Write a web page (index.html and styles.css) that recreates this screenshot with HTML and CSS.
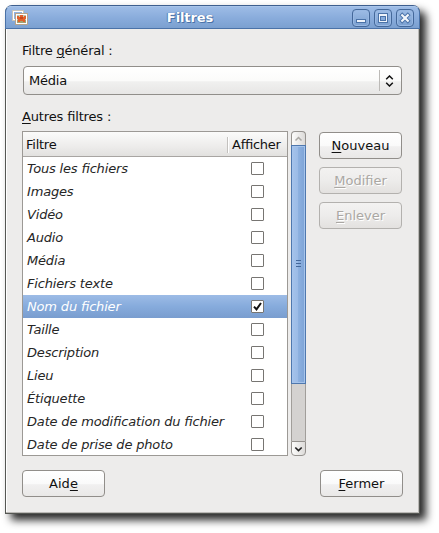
FILE: index.html
```
<!DOCTYPE html>
<html lang="fr">
<head>
<meta charset="utf-8">
<title>Filtres</title>
<link rel="stylesheet" href="styles.css">
</head>
<body>
<div class="window">
  <header class="titlebar">
    <svg class="app-icon" width="16" height="16" viewBox="0 0 16 16" shape-rendering="crispEdges">
      <path d="M0 0h12v3H3v8H0z" fill="#c9c4b8"/>
      <path d="M1 1h10v2H3v7H1z" fill="#fff"/>
      <path d="M2 2h8v1H3v6H2z" fill="#8fb4e2"/>
      <rect x="3" y="3" width="13" height="12" fill="#b8a48b"/>
      <rect x="4" y="4" width="11" height="10" fill="#fff"/>
      <rect x="5" y="5" width="9" height="8" fill="#b9cbb5"/>
      <rect x="5" y="10" width="9" height="3" fill="#a0a274"/>
      <path d="M5 6h2v1h1V5h3v2h1V6h2v3h-1v3h-2v-1H8v1H6V9H5z" fill="#e2602a"/>
      <path d="M8 7h3v2H8z" fill="#c8481a"/>
    </svg>
    <h1 class="title">Filtres</h1>
    <div class="controls">
      <svg class="control" width="18" height="18" viewBox="0 0 16 16" shape-rendering="crispEdges"><rect x="3" y="9" width="10" height="4" fill="#4a72a8"/><rect x="4" y="10" width="8" height="2" fill="#eef3fa"/></svg>
      <svg class="control" width="18" height="18" viewBox="0 0 16 16" shape-rendering="crispEdges"><rect x="3" y="3" width="10" height="10" fill="#4a72a8"/><rect x="4" y="4" width="8" height="8" fill="#eef3fa"/><rect x="5" y="6" width="6" height="5" fill="#4a72a8"/><rect x="6" y="7" width="4" height="3" fill="#86abdc"/></svg>
      <svg class="control" width="18" height="18" viewBox="0 0 16 16"><path d="M5.2 5.2l5.6 5.6M10.8 5.2l-5.6 5.6" stroke="#4a72a8" stroke-width="4" stroke-linecap="square"/><path d="M5.2 5.2l5.6 5.6M10.8 5.2l-5.6 5.6" stroke="#f3f6fb" stroke-width="2.2" stroke-linecap="square"/></svg>
    </div>
  </header>
  <main class="content">
    <div class="label">Filtre <u>g</u>énéral :</div>
    <div class="combo"><span>Média</span><span class="combo-arrows"><svg width="9" height="12" viewBox="0 0 9 12"><path d="M1.2 4.2L4.5 1l3.3 3.2M1.2 7.8L4.5 11l3.3-3.2" fill="none" stroke="#111" stroke-width="1.5"/></svg></span></div>
    <div class="label label-others"><u>A</u>utres filtres :</div>
    <div class="filters">
      <div class="list">
        <div class="list-head"><span class="head-name">Filtre</span><span class="head-show">Afficher</span></div>
        <div class="row"><span>Tous les fichiers</span><i class="check"></i></div>
        <div class="row"><span>Images</span><i class="check"></i></div>
        <div class="row"><span>Vidéo</span><i class="check"></i></div>
        <div class="row"><span>Audio</span><i class="check"></i></div>
        <div class="row"><span>Média</span><i class="check"></i></div>
        <div class="row"><span>Fichiers texte</span><i class="check"></i></div>
        <div class="row selected"><span>Nom du fichier</span><i class="check"><svg width="11" height="11" viewBox="0 0 11 11"><path d="M2 5.6L4.5 8.4L9 2" fill="none" stroke="#111" stroke-width="2"/></svg></i></div>
        <div class="row"><span>Taille</span><i class="check"></i></div>
        <div class="row"><span>Description</span><i class="check"></i></div>
        <div class="row"><span>Lieu</span><i class="check"></i></div>
        <div class="row"><span>Étiquette</span><i class="check"></i></div>
        <div class="row"><span>Date de modification du fichier</span><i class="check"></i></div>
        <div class="row"><span>Date de prise de photo</span><i class="check"></i></div>
      </div>
      <div class="scrollbar">
        <div class="step step-up"><svg width="9" height="6" viewBox="0 0 9 6"><path d="M1.5 4.5l3-3 3 3" fill="none" stroke="#aaa8a4" stroke-width="1.5"/></svg></div>
        <div class="thumb"><i></i><i></i><i></i></div>
        <div class="trough"></div>
        <div class="step step-down"><svg width="9" height="6" viewBox="0 0 9 6"><path d="M1.3 1.5l3.2 3 3.2-3" fill="none" stroke="#222" stroke-width="1.7"/></svg></div>
      </div>
      <div class="actions">
        <button class="button"><span><u>N</u>ouveau</span></button>
        <button class="button" disabled><span><u>M</u>odifier</span></button>
        <button class="button" disabled><span><u>E</u>nlever</span></button>
      </div>
    </div>
    <footer class="footer">
      <button class="button"><span>Aid<u>e</u></span></button>
      <button class="button"><span><u>F</u>ermer</span></button>
    </footer>
  </main>
</div>
</body>
</html>
```
FILE: styles.css
```
* { box-sizing: border-box; }
body {
  margin: 0;
  padding: 5px;
  height: 533px;
  overflow: hidden;
  background: #fff;
  font: 13px/16px "DejaVu Sans", sans-serif;
  font-feature-settings: "liga" 1;
  color: #111;
}
u { text-decoration: underline; text-decoration-thickness: 1px; text-underline-offset: 2px; }
.window {
  width: 415px;
  height: 509px;
  border: 1px solid #555753;
  border-top-color: #3e5f8f;
  border-radius: 7px 7px 0 0;
  background: #edeceb;
  box-shadow: inset -1px -1px #bbb9b6, inset 1px 0 #fff, 6px 6px 9px rgba(0, 0, 0, .85);
}
.titlebar {
  display: flex;
  align-items: center;
  height: 23px;
  margin: 0 -1px;
  padding: 0 5px 0 6px;
  border: 1px solid #4a72a8;
  border-top: 1px solid #a9c5ea;
  border-radius: 6px 6px 0 0;
  background: linear-gradient(#9dbce6, #88abdb 55%, #7ba0d0);
}
.app-icon { margin-top: 1px; }
.title {
  flex: 1;
  margin: 0;
  text-align: center;
  font-size: 13px;
  line-height: 16px;
  letter-spacing: -.1px;
  color: #fff;
  text-shadow: 1px 1px #4a72a8, 0 0 1px #4a72a8, -1px 0 #5d86bc;
}
.controls { display: flex; gap: 4px; }
.control {
  border: 1px solid #44689a;
  border-radius: 4px;
  background: linear-gradient(#9dbce6, #7ba0d0);
  box-shadow: inset 0 0 0 1px #98b8e3;
}
.content { padding: 14px 16px 0; }
.label { height: 16px; letter-spacing: -.22px; }
.combo {
  display: flex;
  align-items: center;
  justify-content: space-between;
  width: 379px;
  height: 29px;
  margin: 7px 0 0 1px;
  padding-left: 5px;
  border: 1px solid #918e8a;
  border-radius: 4px;
  background: linear-gradient(#fff, #fbfbfa 50%, #f0f0ef 55%, #e7e6e5);
  letter-spacing: -.2px;
}
.combo-arrows {
  display: flex;
  align-items: center;
  justify-content: center;
  width: 22px;
  height: 21px;
  padding-right: 2px;
  border-left: 1px solid #bcbab7;
}
.label-others { margin-top: 14px; letter-spacing: -.15px; }
.filters { display: flex; height: 325px; margin-top: 6px; }
.list {
  width: 266px;
  overflow: hidden;
  border: 1px solid #9c9995;
  background: #fff;
}
.list-head {
  display: flex;
  align-items: center;
  height: 25px;
  padding-top: 1px;
  border-bottom: 1px solid #a8a5a2;
  background: linear-gradient(#fbfbfa, #edeceb 60%, #e2e1df);
  letter-spacing: -.25px;
}
.head-name { width: 205px; padding-left: 3px; border-right: 1px solid #c3c1be; }
.head-show { padding-left: 4px; box-shadow: inset 1px 0 #fff; }
.row {
  display: flex;
  align-items: center;
  justify-content: space-between;
  height: 23px;
  padding: 0 23px 0 4px;
  font-style: italic;
  letter-spacing: -.17px;
  color: #262626;
}
.selected { color: #fff; background: linear-gradient(#9dbce6, #86abdc 50%, #799dcf); }
.check {
  width: 13px;
  height: 13px;
  border: 1px solid #777572;
  border-radius: 1px;
  background: #fff;
}
.check svg { display: block; }
.scrollbar {
  display: flex;
  flex-direction: column;
  width: 15px;
  margin-left: 3px;
}
.step {
  display: flex;
  align-items: center;
  justify-content: center;
  height: 15px;
  border: 1px solid #95928e;
  background: linear-gradient(90deg, #fcfcfb, #dddbd9);
}
.step-up { height: 14px; border-bottom: 0; border-radius: 4px 4px 0 0; }
.step-down { border-radius: 0 0 4px 4px; }
.thumb {
  display: flex;
  flex-direction: column;
  align-items: center;
  justify-content: center;
  gap: 2px;
  height: 239px;
  padding-bottom: 3px;
  border: 1px solid #4f78ae;
  background: linear-gradient(90deg, #a5c3eb, #9bbbe6 45%, #8cb0df 50%, #7da3d6);
  box-shadow: inset 0 0 0 1px #a6c4eb;
}
.thumb i { width: 5px; height: 1px; background: #44689a; }
.trough {
  flex: 1;
  border: solid #a19e9a;
  border-width: 0 1px;
  background: #d4d2d0;
}
.actions {
  display: flex;
  flex-direction: column;
  gap: 8px;
  margin: 1px 0 0 13px;
}
.button {
  width: 83px;
  height: 27px;
  padding: 1px 0 0;
  border: 1px solid #918e8a;
  border-radius: 4px;
  background: linear-gradient(#fff, #fafafa 50%, #f1f0f0 55%, #e9e8e7);
  font: inherit;
  color: #111;
}
.button:disabled {
  border-color: #b3b1ae;
  background: linear-gradient(#f3f2f1, #edeceb 50%, #e3e1df);
  color: #aaa7a3;
  text-shadow: 1px 1px #fff;
}
.footer { display: flex; justify-content: space-between; width: 381px; margin-top: 14px; }
```
